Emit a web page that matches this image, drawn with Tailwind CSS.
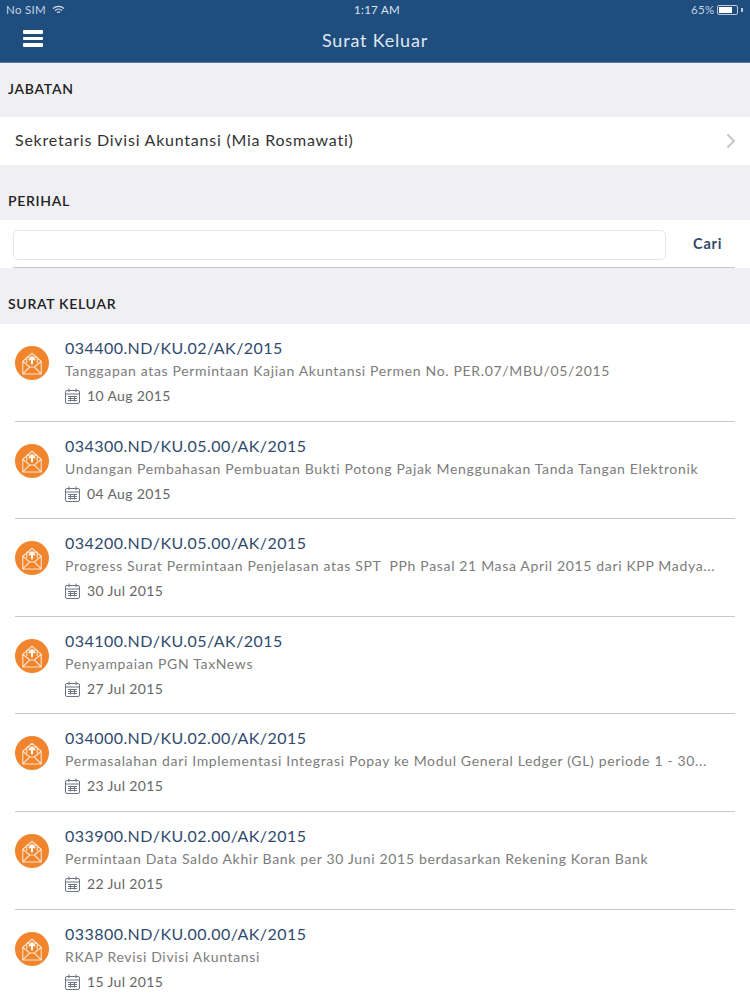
<!DOCTYPE html>
<html lang="id">
<head>
    <meta charset="UTF-8">
    <meta name="viewport" content="width=device-width, initial-scale=1.0">
    <title>Surat Keluar</title>
    <script src="https://cdn.jsdelivr.net/npm/@tailwindcss/browser@4"></script>
</head>
<body class="bg-white font-['Lato','Liberation_Sans',sans-serif]">
    <div class="w-[750px] h-[1000px] overflow-hidden bg-white">
        <!-- Header -->
        <header class="h-[63px] bg-[#1f4d7e] border-b border-[#5d7a9c] text-white relative">
            <div class="h-[20px] px-[6px] flex items-center justify-between text-[11.5px] tracking-[0.3px] text-[#c3d3e6]">
                <div class="flex items-center gap-[6px] w-[120px]">
                    <span>No SIM</span>
                    <svg width="13" height="10" viewBox="0 0 13 10" fill="none" stroke="#d5e0ee" stroke-width="1.3"><path d="M1 3.6a8 8 0 0 1 11 0M3 5.6a5 5 0 0 1 7 0M5 7.5a2.3 2.3 0 0 1 3 0"/></svg>
                </div>
                <span class="text-[#dbe5f1] ml-[4px]">1:17 AM</span>
                <div class="flex items-center justify-end gap-[3px] w-[120px] pr-[1px]">
                    <span>65%</span>
                    <div class="w-[21px] h-[10px] border border-[#b9cbe0] rounded-[2px] p-[1px]"><div class="w-[13px] h-full bg-white"></div></div>
                    <div class="w-[1.5px] h-[4px] bg-[#b9cbe0]"></div>
                </div>
            </div>
            <div class="h-[42px] flex items-center justify-center relative">
                <div class="absolute left-[23px] top-[10px] w-[20px] flex flex-col gap-[3px]">
                    <div class="h-[3.5px] bg-white rounded-[1px]"></div>
                    <div class="h-[3.5px] bg-white rounded-[1px]"></div>
                    <div class="h-[3.5px] bg-white rounded-[1px]"></div>
                </div>
                <h1 class="text-[18px] tracking-[0.8px] text-[#dfe7f0] -mt-[2px]">Surat Keluar</h1>
            </div>
        </header>

        <!-- Jabatan -->
        <div class="h-[54px] bg-[#efeff4] pl-[8px] pb-[4px] flex items-center text-[14px] font-semibold tracking-[0.7px] text-[#222]">JABATAN</div>
        <div class="h-[48px] bg-white pl-[15px] pr-[14px] flex items-center justify-between text-[16px] tracking-[0.77px] text-[#333]">
            <span class="-mt-[2px]">Sekretaris Divisi Akuntansi (Mia Rosmawati)</span>
            <svg width="10" height="16" viewBox="0 0 10 16" fill="none" stroke="#c4c4c8" stroke-width="1.8"><path d="M1.5 1.5 8 8l-6.5 6.5"/></svg>
        </div>

        <!-- Perihal -->
        <div class="h-[55px] bg-[#efeff4] pl-[8px] pt-[15px] flex items-center text-[14px] font-semibold tracking-[0.7px] text-[#222]">PERIHAL</div>
        <div class="h-[48px] bg-white pl-[13px] pr-[15px] flex items-start">
            <div class="flex-1 border-b border-[#c8c8c8] h-[48px] flex items-start">
                <div class="w-[653px] h-[30px] mt-[10px] border border-[#e6e6e8] rounded-[5px] bg-white"></div>
                <div class="flex-1 pl-[27px] pt-[13px] text-[14.5px] font-bold tracking-[0.8px] text-[#33486a]">Cari</div>
            </div>
        </div>

        <!-- Surat keluar -->
        <div class="h-[56px] bg-[#efeff4] pl-[8px] pt-[15px] flex items-center text-[14px] font-semibold tracking-[0.7px] text-[#222]">SURAT KELUAR</div>
        <div id="list"></div>
    </div>

    <script>
        const surat = [
            ['034400.ND/KU.02/AK/2015', 'Tanggapan atas Permintaan Kajian Akuntansi Permen No. PER.07/MBU/05/2015', '10 Aug 2015'],
            ['034300.ND/KU.05.00/AK/2015', 'Undangan Pembahasan Pembuatan Bukti Potong Pajak Menggunakan Tanda Tangan Elektronik', '04 Aug 2015'],
            ['034200.ND/KU.05.00/AK/2015', 'Progress Surat Permintaan Penjelasan atas SPT  PPh Pasal 21 Masa April 2015 dari KPP Madya...', '30 Jul 2015'],
            ['034100.ND/KU.05/AK/2015', 'Penyampaian PGN TaxNews', '27 Jul 2015'],
            ['034000.ND/KU.02.00/AK/2015', 'Permasalahan dari Implementasi Integrasi Popay ke Modul General Ledger (GL) periode 1 - 30...', '23 Jul 2015'],
            ['033900.ND/KU.02.00/AK/2015', 'Permintaan Data Saldo Akhir Bank per 30 Juni 2015 berdasarkan Rekening Koran Bank', '22 Jul 2015'],
            ['033800.ND/KU.00.00/AK/2015', 'RKAP Revisi Divisi Akuntansi', '15 Jul 2015']
        ];

        document.getElementById('list').innerHTML = surat.map(s => `
            <div class="ml-[15px] mr-[15px] h-[97.6px] border-b border-[#c8c8c8] flex">
                <div class="w-[34px] h-[34px] mt-[22px] rounded-full bg-[#f0852d] flex items-center justify-center shrink-0">
                    <svg width="28" height="30" viewBox="0 0 24 26" fill="none" stroke="#fde3cc" stroke-width="1">
                        <path d="M4 11.5v11h16v-11L12 4.5zM4 22.5l6-6h4l6 6M4 11.5l6 5M20 11.5l-6 5"/>
                        <path d="M7.5 13V8h9v5"/>
                        <path d="M12 14V8.5M9.5 10.5 12 8l2.5 2.5" stroke="#ffffff" stroke-width="1.7"/>
                    </svg>
                </div>
                <div class="ml-[16px] pt-[13px] min-w-0">
                    <div class="text-[16px] leading-[22px] tracking-[0.45px] text-[#2f4a6e] whitespace-nowrap">${s[0]}</div>
                    <div class="text-[14px] leading-[20px] mt-[2px] tracking-[0.66px] text-[#7c7c7c] whitespace-pre">${s[1]}</div>
                    <div class="flex items-center mt-[5px] text-[14px] leading-[20px] tracking-[0.35px] text-[#666]">
                        <svg class="mr-[7px]" width="15" height="16" viewBox="0 0 15 16" fill="none" stroke="#6d7480" stroke-width="1"><rect x="0.5" y="2.5" width="14" height="13" rx="1.5"/><path d="M0.5 6h14M4 0.5v3.5M11 0.5v3.5M3 8.5h9M3 10.5h9M3 12.5h9" /><path d="M5.5 8v5.5M9.5 8v5.5" /></svg>
                        <span>${s[2]}</span>
                    </div>
                </div>
            </div>
        `).join('');
    </script>
</body>
</html>
